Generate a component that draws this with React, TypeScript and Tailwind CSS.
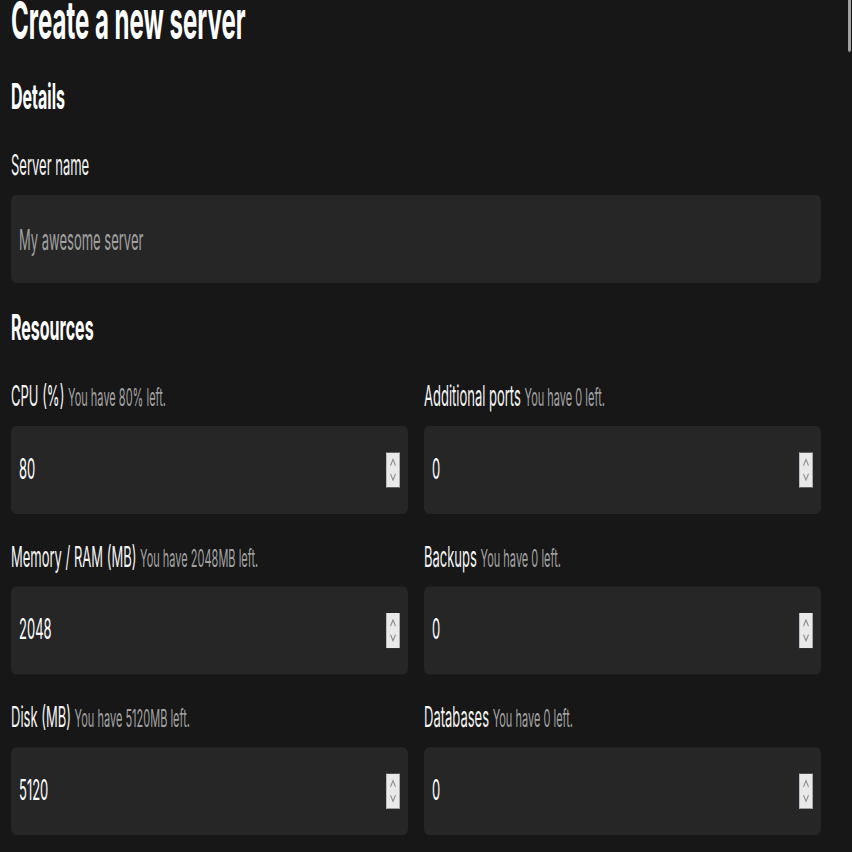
import { useState } from 'react';

type Field = {
  label: string;
  hint: string;
  value: string;
};

const resources: Field[] = [
  { label: 'CPU (%)', hint: 'You have 80% left.', value: '80' },
  { label: 'Additional ports', hint: 'You have 0 left.', value: '0' },
  { label: 'Memory / RAM (MB)', hint: 'You have 2048MB left.', value: '2048' },
  { label: 'Backups', hint: 'You have 0 left.', value: '0' },
  { label: 'Disk (MB)', hint: 'You have 5120MB left.', value: '5120' },
  { label: 'Databases', hint: 'You have 0 left.', value: '0' },
];

function Spinner() {
  return (
    <svg width="14" height="16" viewBox="0 0 14 16" className="shrink-0">
      <rect x="0" y="0" width="14" height="16" fill="#e9e9e9" />
      <rect x="0" y="0" width="1" height="16" fill="#b8bcc4" />
      <rect x="13" y="0" width="1" height="16" fill="#a9a9a9" />
      <polyline points="4.5,6 7,3.2 9.5,6" fill="none" stroke="#8c8c8c" strokeWidth="0.9" />
      <polyline points="4.5,9.8 7,12.6 9.5,9.8" fill="none" stroke="#8c8c8c" strokeWidth="0.9" />
    </svg>
  );
}

function NumberField({ field }: { field: Field }) {
  const [value, setValue] = useState(field.value);

  return (
    <div className="flex flex-col">
      <label className="text-[13px] leading-5 text-neutral-100">
        {field.label} <span className="text-[11px] leading-4 text-neutral-400">{field.hint}</span>
      </label>
      <div className="mt-1 flex h-10 items-center rounded-[5px/3px] bg-neutral-800 pl-2 pr-2">
        <input
          type="text"
          inputMode="numeric"
          value={value}
          onChange={(e) => setValue(e.target.value)}
          className="min-w-0 flex-1 bg-transparent text-[13px] text-white outline-none"
        />
        <Spinner />
      </div>
    </div>
  );
}

export default function App() {
  const [name, setName] = useState('');

  return (
    <div className="h-[852px] w-[852px] overflow-hidden bg-neutral-900 font-[Inter,sans-serif]">
      {/* the capture is stretched vertically, so the page is laid out short and scaled */}
      <div className="relative h-[388px] origin-top scale-y-[2.2]">
        <div className="absolute right-[1px] top-0 h-[30px] w-[3px] rounded-full bg-neutral-400" />

        <div className="ml-[11px] w-[810px]">
          <h1 className="-mt-[14px] text-2xl leading-8 font-bold text-white">Create a new server</h1>

          <h2 className="mt-[6px] text-base leading-6 font-bold text-white">Details</h2>
          <label className="mt-[9px] block text-[13px] leading-5 text-neutral-100">Server name</label>
          <input
            type="text"
            value={name}
            onChange={(e) => setName(e.target.value)}
            placeholder="My awesome server"
            className="mt-1 h-10 w-full rounded-[5px/3px] bg-neutral-800 px-2 text-[13px] text-white outline-none placeholder:text-neutral-400"
          />

          <h2 className="mt-2 text-base leading-6 font-bold text-white">Resources</h2>
          <div className="mt-[9px] grid grid-cols-2 gap-x-4 gap-y-[9px]">
            {resources.map((field) => (
              <NumberField key={field.label} field={field} />
            ))}
          </div>
        </div>
      </div>
    </div>
  );
}
